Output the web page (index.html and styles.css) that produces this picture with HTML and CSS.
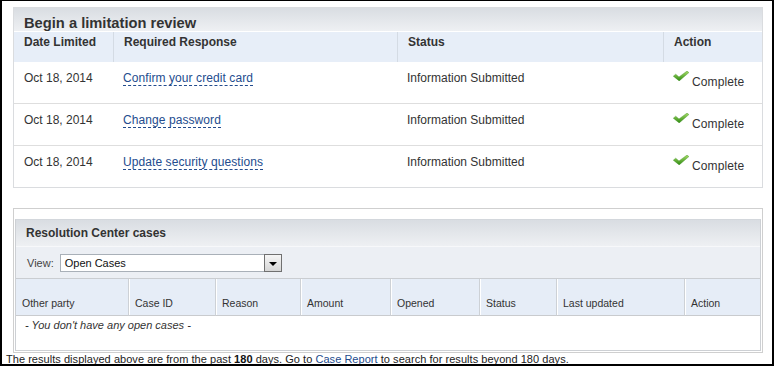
FILE: index.html
```html
<!DOCTYPE html>
<html lang="en">
<head>
<meta charset="utf-8">
<title>Limitation review</title>
<link rel="stylesheet" href="styles.css">
</head>
<body>
<div class="frame">
  <section class="panel review">
    <h2 class="review-title">Begin a limitation review</h2>
    <table class="review-table">
      <thead>
        <tr>
          <th class="rc1">Date Limited</th>
          <th class="rc2">Required Response</th>
          <th class="rc3">Status</th>
          <th class="rc4">Action</th>
        </tr>
      </thead>
      <tbody>
        <tr>
          <td>Oct 18, 2014</td>
          <td><a class="dlink" href="#">Confirm your credit card</a></td>
          <td>Information Submitted</td>
          <td><span class="done"><svg class="check" viewBox="0 0 16 10" width="16" height="10"><defs><linearGradient id="g1" x1="0" y1="0" x2="0" y2="1"><stop offset="0" stop-color="#a6dc66"/><stop offset="1" stop-color="#2e8a12"/></linearGradient></defs><path d="M0.3 5.2 L2.7 3.2 L6 5.9 L14 0.1 L15.9 1.6 L6.2 9.9 Z" fill="url(#g1)" stroke="#3d8f20" stroke-width="0.4"/></svg><span class="done-text">Complete</span></span></td>
        </tr>
        <tr>
          <td>Oct 18, 2014</td>
          <td><a class="dlink" href="#">Change password</a></td>
          <td>Information Submitted</td>
          <td><span class="done"><svg class="check" viewBox="0 0 16 10" width="16" height="10"><path d="M0.3 5.2 L2.7 3.2 L6 5.9 L14 0.1 L15.9 1.6 L6.2 9.9 Z" fill="url(#g1)" stroke="#3d8f20" stroke-width="0.4"/></svg><span class="done-text">Complete</span></span></td>
        </tr>
        <tr>
          <td>Oct 18, 2014</td>
          <td><a class="dlink" href="#">Update security questions</a></td>
          <td>Information Submitted</td>
          <td><span class="done"><svg class="check" viewBox="0 0 16 10" width="16" height="10"><path d="M0.3 5.2 L2.7 3.2 L6 5.9 L14 0.1 L15.9 1.6 L6.2 9.9 Z" fill="url(#g1)" stroke="#3d8f20" stroke-width="0.4"/></svg><span class="done-text">Complete</span></span></td>
        </tr>
      </tbody>
    </table>
  </section>

  <section class="panel cases">
    <div class="cases-inner">
      <h2 class="cases-title">Resolution Center cases</h2>
      <div class="view-bar">
        <span class="view-label">View:</span>
        <div class="select">
          <span class="select-value">Open Cases</span>
          <span class="select-btn"><span class="tri"></span></span>
        </div>
      </div>
      <table class="cases-table">
        <thead>
          <tr>
            <th class="k1">Other party</th>
            <th class="k2">Case ID</th>
            <th class="k3">Reason</th>
            <th class="k4">Amount</th>
            <th class="k5">Opened</th>
            <th class="k6">Status</th>
            <th class="k7">Last updated</th>
            <th class="k8">Action</th>
          </tr>
        </thead>
        <tbody>
          <tr>
            <td class="empty" colspan="8">- You don't have any open cases -</td>
          </tr>
        </tbody>
      </table>
    </div>
  </section>

  <p class="footnote">The results displayed above are from the past <b>180</b> days. Go to <a class="report" href="#">Case Report</a> to search for results beyond 180 days.</p>
</div>
</body>
</html>
```

FILE: styles.css
```css
* { box-sizing: border-box; }
html, body { margin: 0; padding: 0; background: #fff; }
body {
  font-family: "Liberation Sans", Arial, sans-serif;
  color: #333;
}

.frame {
  width: 774px;
  height: 366px;
  border-style: solid;
  border-color: #000;
  border-width: 1px 2px 2px 2px;
  padding: 6px 0 0 4px;
  overflow: hidden;
}

.panel {
  width: 750px;
  margin-left: 7px;
}

/* ---------- limitation review ---------- */
.review {
  border: 1px solid #dadcdf;
}
.review-title {
  margin: 0;
  height: 24px;
  padding: 7px 0 0 10px;
  font-size: 14.7px;
  line-height: 16px;
  font-weight: bold;
  color: #333;
  background: linear-gradient(#d9dde2, #eef0f3);
  border-bottom: 1px solid #fff;
}
.review-table {
  width: 748px;
  border-collapse: separate;
  border-spacing: 0;
  table-layout: fixed;
}
.review-table th {
  height: 30px;
  padding: 3px 10px 0;
  text-align: left;
  vertical-align: top;
  font-size: 12px;
  line-height: 14px;
  font-weight: bold;
  color: #333;
  background: #e7eef8;
}
.review-table th + th { border-left: 1px solid #d4dbe4; }
.rc1 { width: 99px; }
.rc2 { width: 284px; }
.rc3 { width: 266px; }
.rc4 { width: 99px; }
.review-table td {
  height: 42px;
  padding: 9px 10px 0;
  vertical-align: top;
  font-size: 12px;
  line-height: 14px;
  color: #333;
  border-bottom: 1px solid #dedede;
}
.review-table tbody tr:last-child td {
  height: 41px;
  border-bottom: none;
}
.dlink {
  color: #234c8e;
  text-decoration: none;
  border-bottom: 1px dashed #234c8e;
  letter-spacing: 0.08px;
}
.done {
  display: flex;
  align-items: flex-start;
}
.check {
  display: block;
  margin-top: 0;
  flex: none;
}
.done-text {
  margin-left: 3px;
  margin-top: 4px;
  color: #333;
  letter-spacing: 0.1px;
}

/* ---------- resolution center ---------- */
.cases {
  margin-top: 20px;
  border: 1px solid #cfcfcf;
  padding: 10px 1px 1px 1px;
}
.cases-inner {
  border: 1px solid #cdd0d4;
  border-top-color: #d3d7dc;
}
.cases-title {
  margin: 0;
  height: 27px;
  padding: 6px 0 0 10px;
  font-size: 12px;
  line-height: 14px;
  font-weight: bold;
  color: #333;
  background: linear-gradient(#d9dde2, #eef0f3);
  border-bottom: 1px solid #f7f8fa;
}
.view-bar {
  height: 32px;
  display: flex;
  align-items: center;
  gap: 6px;
  padding-left: 11px;
  background: #eceff4;
  border-bottom: 1px solid #cacdd1;
  font-size: 11px;
}
.view-label { color: #444; }
.select {
  width: 222px;
  height: 18px;
  display: flex;
  align-items: stretch;
  background: #fff;
  border: 1px solid #a9b0b8;
  border-right: none;
  margin-top: 1px;
}
.select-value {
  flex: 1;
  padding-left: 4px;
  line-height: 16px;
  color: #111;
}
.select-btn {
  width: 18px;
  margin: -1px 0;
  border: 1px solid #707070;
  background: linear-gradient(#f6f6f6, #d6d6d6);
  display: flex;
  align-items: center;
  justify-content: center;
}
.tri {
  width: 0;
  height: 0;
  border-left: 4px solid transparent;
  border-right: 4px solid transparent;
  border-top: 4px solid #000;
  margin-top: 1px;
}
.cases-table {
  width: 744px;
  border-collapse: separate;
  border-spacing: 0;
  table-layout: fixed;
}
.cases-table th {
  height: 37px;
  padding: 0 0 5px 6px;
  text-align: left;
  vertical-align: bottom;
  font-size: 10.5px;
  line-height: 13px;
  font-weight: normal;
  color: #333;
  background: #e6edf7;
  border-bottom: 1px solid #c9cbce;
}
.cases-table th + th {
  border-left: 1px solid #cdd1d6;
  box-shadow: inset 1px 0 0 #fff;
}
.k1 { width: 112px; }
.k2 { width: 87px; }
.k3 { width: 85px; }
.k4 { width: 90px; }
.k5 { width: 89px; }
.k6 { width: 77px; }
.k7 { width: 128px; }
.k8 { width: 76px; }
.cases-table td.empty {
  height: 34px;
  padding: 3px 0 0 9px;
  vertical-align: top;
  font-size: 11px;
  line-height: 13px;
  font-style: italic;
  color: #333;
}

/* ---------- footnote ---------- */
.footnote {
  margin: 0;
  font-size: 11px;
  line-height: 13px;
  color: #222;
  letter-spacing: 0.04px;
}
.footnote b { color: #111; }
.report {
  color: #234c8e;
  text-decoration: none;
  border-bottom: 1px solid #f2a64a;
}
```
